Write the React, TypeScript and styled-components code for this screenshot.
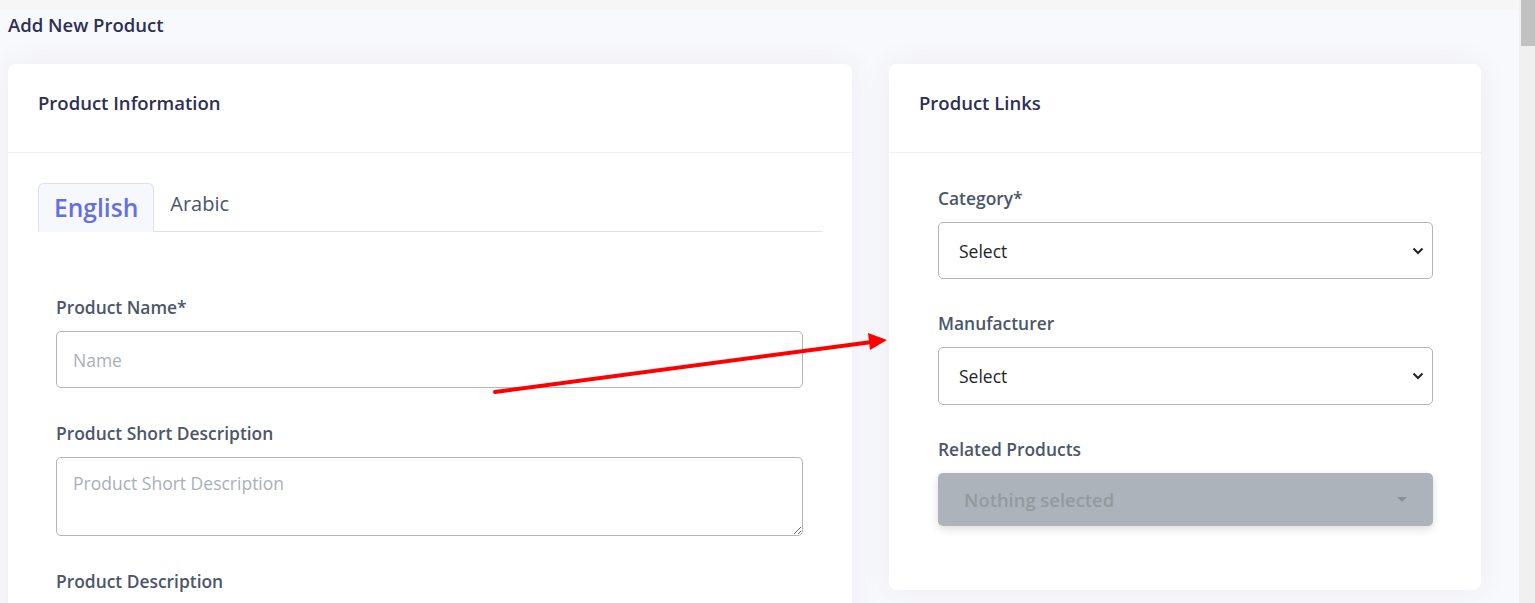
import React from "react";
import styled, { createGlobalStyle } from "styled-components";

const Global = createGlobalStyle`
  html, body { margin: 0; padding: 0; height: 100%; overflow: hidden; }
  body { font-family: "Open Sans", "Noto Sans", sans-serif; background: #f8f9fc; }
  * { box-sizing: border-box; }
`;

const Shell = styled.div`
  display: flex;
  width: 100vw;
  height: 603px;
  overflow: hidden;
`;

const Main = styled.main`
  position: relative;
  flex: 1;
  display: flex;
  flex-direction: column;
  background: #f8f9fc;
  overflow: hidden;
  & > * { flex-shrink: 0; }
`;

const TopStrip = styled.div`
  height: 10px;
  background: #f6f6f7;
`;

const PageTitle = styled.h1`
  margin: 0;
  padding: 2px 8px 0;
  font-size: 18.5px;
  line-height: 26px;
  font-weight: 600;
  color: #2d2f55;
`;

const Columns = styled.div`
  display: grid;
  grid-template-columns: 844px 592px;
  column-gap: 37px;
  align-items: start;
  padding: 26px 38px 0 8px;
`;

const Card = styled.section`
  background: #fff;
  border-radius: 8px;
  box-shadow: 0 0 30px 0 rgba(82, 63, 140, 0.07);
`;

const CardHeader = styled.header`
  height: 89px;
  padding: 27px 30px 0;
  border-bottom: 1px solid #eef0f4;
`;

const CardTitle = styled.h2`
  margin: 0;
  font-size: 18.5px;
  line-height: 24px;
  font-weight: 600;
  color: #2d2f55;
`;

const CardBody = styled.div<{ $pad: string }>`
  padding: ${(p) => p.$pad};
`;

const TabNav = styled.div`
  display: flex;
  align-items: flex-start;
  border-bottom: 1px solid #dee2e6;
`;

const Tab = styled.div<{ $active?: boolean }>`
  padding: 8px 15px;
  margin-bottom: -1px;
  border: 1px solid ${(p) => (p.$active ? "#dee2e6" : "transparent")};
  border-bottom-color: ${(p) => (p.$active ? "#f7f8fd" : "transparent")};
  border-radius: 6px 6px 0 0;
  background: ${(p) => (p.$active ? "#f7f8fd" : "transparent")};
  color: ${(p) => (p.$active ? "#6470e0" : "#4b566b")};
  font-size: ${(p) => (p.$active ? "24.6px" : "20px")};
  line-height: ${(p) => (p.$active ? "31px" : "24px")};
  font-weight: ${(p) => (p.$active ? 600 : 400)};
`;

const Form = styled.div`
  padding: 62px 19px 0 18px;
  display: flex;
  flex-direction: column;
  gap: 32px;
`;

const Group = styled.div`
  display: flex;
  flex-direction: column;
`;

const Label = styled.label`
  font-size: 17.4px;
  line-height: 26px;
  font-weight: 600;
  color: #4b566b;
  margin-bottom: 11px;
`;

const fieldBase = `
  width: 100%;
  border: 1px solid #b5b5b5;
  border-radius: 5px;
  background: #fff;
  font-family: "Open Sans", "Noto Sans", sans-serif;
  font-size: 17.5px;
  color: #212529;
  outline: none;
`;

const Input = styled.input`
  ${fieldBase}
  height: 57px;
  padding: 0 16px;
  &::placeholder { color: #a9afb7; }
`;

const TextArea = styled.textarea`
  ${fieldBase}
  height: 79px;
  padding: 13px 16px;
  resize: vertical;
  &::placeholder { color: #a9afb7; }
`;

const EditorStub = styled.div`
  height: 120px;
  border: 1px solid #e6e6e6;
  border-radius: 5px;
  background: #fafafa;
`;

const SelectWrap = styled.div`
  position: relative;
`;

const Select = styled.select<{ $h: number }>`
  ${fieldBase}
  appearance: none;
  height: ${(p) => p.$h}px;
  padding: 0 20px;
`;

const Chevron = styled.svg`
  position: absolute;
  right: 9px;
  top: 50%;
  transform: translateY(-50%);
  pointer-events: none;
`;

const RightForm = styled.div`
  display: flex;
  flex-direction: column;
  gap: 31px;
`;

const PickerButton = styled.button`
  height: 53px;
  width: 100%;
  display: flex;
  align-items: center;
  justify-content: space-between;
  padding: 0 26px;
  border: none;
  border-radius: 5px;
  background: #adb3ba;
  box-shadow: 0 3px 8px rgba(0, 0, 0, 0.14);
  font-family: "Open Sans", "Noto Sans", sans-serif;
  font-size: 18.4px;
  font-weight: 600;
  color: #949a9f;
`;

const Caret = styled.span`
  width: 0;
  height: 0;
  border-left: 5px solid transparent;
  border-right: 5px solid transparent;
  border-top: 5px solid #8c9196;
`;

const ScrollTrack = styled.aside`
  width: 16px;
  flex: none;
  background: #f0f0f0;
  padding-left: 2px;
`;

const ScrollThumb = styled.div`
  height: 46px;
  background: #c1c1c1;
`;

const Annotation = styled.svg`
  position: absolute;
  left: 0;
  top: 0;
  pointer-events: none;
`;

const ChevronIcon = () => (
  <Chevron width="12" height="8" viewBox="0 0 12 8">
    <path d="M1.5 1.5 L6 6 L10.5 1.5" fill="none" stroke="#1f2328" strokeWidth="2" />
  </Chevron>
);

export default function App() {
  return (
    <>
      <Global />
      <Shell>
        <Main>
          <TopStrip />
          <PageTitle>Add New Product</PageTitle>
          <Columns>
            <Card>
              <CardHeader>
                <CardTitle>Product Information</CardTitle>
              </CardHeader>
              <CardBody $pad="30px 30px 40px">
                <TabNav>
                  <Tab $active>English</Tab>
                  <Tab>Arabic</Tab>
                </TabNav>
                <Form>
                  <Group>
                    <Label>Product Name*</Label>
                    <Input placeholder="Name" />
                  </Group>
                  <Group>
                    <Label>Product Short Description</Label>
                    <TextArea placeholder="Product Short Description" />
                  </Group>
                  <Group>
                    <Label>Product Description</Label>
                    <EditorStub />
                  </Group>
                </Form>
              </CardBody>
            </Card>
            <Card>
              <CardHeader>
                <CardTitle>Product Links</CardTitle>
              </CardHeader>
              <CardBody $pad="32px 48px 64px 49px">
                <RightForm>
                  <Group>
                    <Label>Category*</Label>
                    <SelectWrap>
                      <Select $h={57} defaultValue="">
                        <option value="">Select</option>
                      </Select>
                      <ChevronIcon />
                    </SelectWrap>
                  </Group>
                  <Group>
                    <Label>Manufacturer</Label>
                    <SelectWrap>
                      <Select $h={58} defaultValue="">
                        <option value="">Select</option>
                      </Select>
                      <ChevronIcon />
                    </SelectWrap>
                  </Group>
                  <Group>
                    <Label>Related Products</Label>
                    <PickerButton type="button" disabled>
                      <span>Nothing selected</span>
                      <Caret />
                    </PickerButton>
                  </Group>
                </RightForm>
              </CardBody>
            </Card>
          </Columns>
          <Annotation width="1519" height="603" viewBox="0 0 1519 603">
            <line x1="495" y1="392" x2="872" y2="342" stroke="#ff0000" strokeWidth="4" strokeLinecap="round" />
            <polygon points="887,340 868,333 870,350" fill="#ff0000" />
          </Annotation>
        </Main>
        <ScrollTrack>
          <ScrollThumb />
        </ScrollTrack>
      </Shell>
    </>
  );
}
